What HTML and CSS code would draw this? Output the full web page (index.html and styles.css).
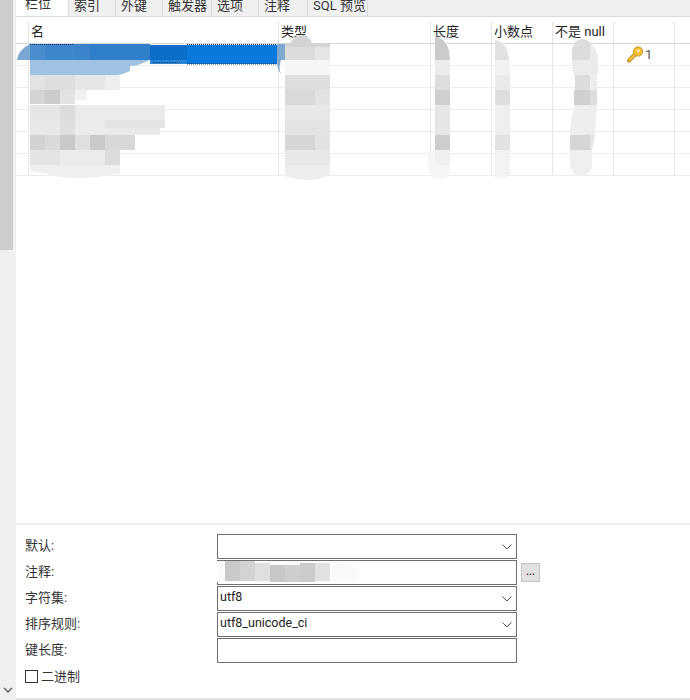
FILE: index.html
```html
<!DOCTYPE html>
<html lang="zh-CN">
<head>
<meta charset="utf-8">
<title>表设计</title>
<link rel="stylesheet" href="styles.css">
</head>
<body>
<div class="app">
  <aside class="scrollbar">
    <div class="thumb"></div>
    <svg class="down" width="10" height="6" viewBox="0 0 10 6"><path d="M1 1l4 4 4-4" fill="none" stroke="#606060" stroke-width="1.4"/></svg>
  </aside>
  <main class="main">
    <nav class="tabs">
      <span class="tab active t52">栏位</span>
      <span class="tab t47">索引</span>
      <span class="tab t47">外键</span>
      <span class="tab t49">触发器</span>
      <span class="tab t47">选项</span>
      <span class="tab t49">注释</span>
      <span class="tab t60">SQL 预览</span>
    </nav>
    <section class="grid">
      <div class="row head">
        <div class="c"></div><div class="c">名</div><div class="c">类型</div><div class="c">长度</div><div class="c">小数点</div><div class="c">不是 null</div><div class="c"></div>
      </div>
      <div class="row">
        <div class="c"></div><div class="c selected"></div><div class="c"></div><div class="c"></div><div class="c"></div><div class="c"></div>
        <div class="c keycell">
          <svg width="17" height="17" viewBox="0 0 17 17"><path d="M2 14.500l6-6" stroke="#b98a1e" stroke-width="4" stroke-linecap="round"/><path d="M2.300 14.200l6-6" stroke="#f6c544" stroke-width="2.200" stroke-linecap="round"/><circle cx="11" cy="5.500" r="4.600" fill="#f6c03a" stroke="#c4951f"/><circle cx="11.500" cy="4.800" r="1.300" fill="#fff3c0"/></svg>
          <span>1</span>
        </div>
      </div>
      <div class="row"><div class="c"></div><div class="c"></div><div class="c"></div><div class="c"></div><div class="c"></div><div class="c"></div><div class="c"></div></div>
      <div class="row"><div class="c"></div><div class="c"></div><div class="c"></div><div class="c"></div><div class="c"></div><div class="c"></div><div class="c"></div></div>
      <div class="row"><div class="c"></div><div class="c"></div><div class="c"></div><div class="c"></div><div class="c"></div><div class="c"></div><div class="c"></div></div>
      <div class="row"><div class="c"></div><div class="c"></div><div class="c"></div><div class="c"></div><div class="c"></div><div class="c"></div><div class="c"></div></div>
      <div class="row"><div class="c"></div><div class="c"></div><div class="c"></div><div class="c"></div><div class="c"></div><div class="c"></div><div class="c"></div></div>
    </section>
    <section class="form">
      <label class="lbl">默认:</label>
      <div class="field"><svg class="chev" width="10" height="6" viewBox="0 0 10 6"><path d="M.5.5L5 5 9.500.5" fill="none" stroke="#555"/></svg></div>
      <span></span>
      <label class="lbl">注释:</label>
      <div class="field"></div>
      <button class="more" type="button">...</button>
      <label class="lbl">字符集:</label>
      <div class="field">utf8<svg class="chev" width="10" height="6" viewBox="0 0 10 6"><path d="M.5.5L5 5 9.500.5" fill="none" stroke="#555"/></svg></div>
      <span></span>
      <label class="lbl">排序规则:</label>
      <div class="field">utf8_unicode_ci<svg class="chev" width="10" height="6" viewBox="0 0 10 6"><path d="M.5.5L5 5 9.500.5" fill="none" stroke="#555"/></svg></div>
      <span></span>
      <label class="lbl">键长度:</label>
      <div class="field"></div>
      <span></span>
      <label class="check"><span class="box"></span>二进制</label>
    </section>
  </main>
</div>
<svg class="redact" width="690" height="700" viewBox="0 0 690 700">
  <!-- selected row mosaic -->
  <path d="M17 60q1-10 13-16h110v16z" fill="#7aa8d2"/>
  <rect x="30" y="44" width="15" height="16" fill="#4a8dcf"/>
  <rect x="45" y="44" width="30" height="16" fill="#3f87cd"/>
  <rect x="75" y="44" width="15" height="16" fill="#3b84cc"/>
  <rect x="90" y="44" width="60" height="16" fill="#2f7fcb"/>
  <rect x="150" y="45" width="37" height="15" fill="#0b6fc9"/>
  <rect x="187" y="45" width="90" height="19" fill="#0a78dc"/>
  <rect x="150" y="60" width="37" height="4" fill="#2a84d8"/>
  <path d="M30 60h120q-12 6-20 6v5q-6 3-12 4H30z" fill="#9fc2e2"/>
  <path d="M277 44h8v16h-4q-3 8 0 14-4-4-4-14z" fill="#7fa8cf"/>
  <path d="M30 44.500h43M187 44.500h90M153 62.500h27M187 64h90" fill="none" stroke="#10305a" stroke-dasharray="1 1"/>
  <!-- name column mosaic -->
  <rect x="30" y="75" width="15" height="15" fill="#e3e3e3"/><rect x="45" y="75" width="30" height="15" fill="#dedede"/><rect x="75" y="75" width="30" height="15" fill="#e6e6e6"/><rect x="105" y="75" width="15" height="15" fill="#eeeeee"/>
  <rect x="30" y="90" width="15" height="14" fill="#d4d4d4"/><rect x="45" y="90" width="15" height="14" fill="#cbcbcb"/><rect x="60" y="90" width="15" height="14" fill="#e2e2e2"/><rect x="75" y="90" width="12" height="10" fill="#f1f1f1"/>
  <rect x="30" y="105" width="30" height="15" fill="#e6e6e6"/><rect x="60" y="105" width="15" height="15" fill="#dcdcdc"/><rect x="75" y="105" width="90" height="15" fill="#ebebeb"/>
  <rect x="30" y="120" width="30" height="15" fill="#e8e8e8"/><rect x="60" y="120" width="15" height="15" fill="#dedede"/><rect x="75" y="120" width="30" height="15" fill="#ececec"/><rect x="105" y="120" width="60" height="8" fill="#e3e3e3"/><rect x="105" y="128" width="55" height="7" fill="#eaeaea"/>
  <rect x="30" y="135" width="15" height="15" fill="#d2d2d2"/><rect x="45" y="135" width="15" height="15" fill="#dadada"/><rect x="60" y="135" width="15" height="15" fill="#c9c9c9"/><rect x="75" y="135" width="15" height="15" fill="#e0e0e0"/><rect x="90" y="135" width="15" height="15" fill="#cacaca"/><rect x="105" y="135" width="30" height="15" fill="#d8d8d8"/>
  <rect x="30" y="150" width="30" height="15" fill="#e4e4e4"/><rect x="60" y="150" width="45" height="15" fill="#ebebeb"/><rect x="105" y="150" width="15" height="15" fill="#dcdcdc"/>
  <path d="M30 165h90v8q-20 5-40 5-25 0-35-5l-15-2z" fill="#efefef"/>
  <!-- type column -->
  <path d="M285 43h5q6-10 14-8 6 3 8 8h18v15h-45z" fill="#d4d4d4"/>
  <rect x="285" y="47" width="30" height="13" fill="#dcdcdc"/><rect x="315" y="47" width="15" height="13" fill="#e6e6e6"/>
  <rect x="285" y="60" width="45" height="15" fill="#f6f6f6"/>
  <rect x="285" y="75" width="45" height="15" fill="#dedede"/>
  <rect x="285" y="90" width="30" height="15" fill="#d9d9d9"/><rect x="315" y="90" width="15" height="15" fill="#e2e2e2"/>
  <rect x="285" y="105" width="45" height="15" fill="#e8e8e8"/>
  <rect x="285" y="120" width="45" height="15" fill="#e4e4e4"/>
  <rect x="285" y="135" width="30" height="15" fill="#d6d6d6"/><rect x="315" y="135" width="15" height="15" fill="#e2e2e2"/>
  <rect x="285" y="150" width="45" height="15" fill="#e8e8e8"/>
  <path d="M285 165h45v10q-10 5-20 5-15 0-25-4z" fill="#eeeeee"/>
  <!-- length column -->
  <path d="M428 150h22v22q-2 7-8 7-14 0-14-10z" fill="#f6f6f6"/>
  <path d="M435 36q10 2 14 14l1 10h-15z" fill="#cbcbcb"/>
  <rect x="435" y="60" width="15" height="15" fill="#ececec"/><rect x="435" y="75" width="15" height="15" fill="#dddddd"/><rect x="435" y="90" width="15" height="15" fill="#cfcfcf"/><rect x="435" y="105" width="15" height="30" fill="#e6e6e6"/><rect x="435" y="135" width="15" height="15" fill="#cdcdcd"/>
  <rect x="435" y="150" width="15" height="15" fill="#f0f0f0"/>
  <!-- decimals column -->
  <path d="M495 40q13 2 14 20h-14z" fill="#e2e2e2"/>
  <rect x="495" y="60" width="15" height="15" fill="#f2f2f2"/><rect x="495" y="75" width="15" height="15" fill="#eaeaea"/><rect x="495" y="90" width="15" height="15" fill="#dedede"/><rect x="495" y="105" width="15" height="30" fill="#efefef"/><rect x="495" y="135" width="15" height="15" fill="#e2e2e2"/>
  <path d="M495 150h15v24q-7 6-15 4z" fill="#f3f3f3"/>
  <!-- not null column -->
  <path d="M572 50q2-11 10-11 10 1 16 16v20h-24q-3-12-2-25z" fill="#ebebeb"/>
  <path d="M572 50q2-11 10-11 5 0 8 4v17h-18z" fill="#dcdcdc"/>
  <rect x="575" y="75" width="15" height="15" fill="#dcdcdc"/><rect x="590" y="75" width="7" height="15" fill="#eeeeee"/>
  <rect x="574" y="90" width="23" height="15" fill="#dddddd"/><rect x="574" y="90" width="16" height="15" fill="#d0d0d0"/>
  <path d="M575 105h22l-2 30h-25q0-16 5-30z" fill="#eeeeee"/>
  <path d="M570 135h25l-3 15h-22z" fill="#e5e5e5"/><rect x="570" y="135" width="20" height="15" fill="#d6d6d6"/>
  <path d="M570 150h22v18q-5 9-12 8-10-3-10-12z" fill="#efefef"/>
  <!-- comment field mosaic -->
  <path d="M217 561h118q22 2 24 14-1 6-8 7H217z" fill="#fafafa"/>
  <rect x="225" y="561" width="15" height="20" fill="#c9c9c9"/><rect x="240" y="561" width="15" height="20" fill="#d3d3d3"/><rect x="255" y="563" width="15" height="18" fill="#dfdfdf"/><rect x="270" y="565" width="15" height="17" fill="#c8c8c8"/><rect x="285" y="565" width="15" height="17" fill="#cecece"/><rect x="300" y="563" width="15" height="19" fill="#cbcbcb"/><rect x="315" y="563" width="15" height="18" fill="#e2e2e2"/>
</svg>
</body>
</html>
```
FILE: styles.css
```css
* { box-sizing: border-box; }
html, body { margin: 0; padding: 0; height: 100%; }
body {
  position: relative;
  background: #fff;
  color: #1a1a1a;
  font: 13px/1 Roboto, "Noto Sans CJK SC", sans-serif;
  overflow: hidden;
}
.app { display: flex; width: 690px; height: 700px; }
.scrollbar {
  width: 16px;
  flex: none;
  background: #f0f0f0;
  display: flex;
  flex-direction: column;
  justify-content: space-between;
  align-items: flex-start;
  padding-bottom: 7px;
}
.thumb { width: 13px; height: 250px; background: #cdcdcd; }
.down { margin-left: 3px; }
.main { flex: 1; display: flex; flex-direction: column; border-bottom: 2px solid #e3e3e3; min-width: 0; }
.tabs {
  display: flex;
  height: 17px;
  flex: none;
  background: #f0f0f0;
  border-bottom: 1px solid #d9d9d9;
  overflow: hidden;
  align-items: flex-end;
}
.tab {
  height: 16px;
  border-right: 1px solid #d9d9d9;
  color: #333;
  padding-left: 5px;
  line-height: 13px;
  white-space: nowrap;
  display: flex;
  align-items: flex-end;
  padding-bottom: 4px;
}
.tab.active { background: #fff; height: 17px; padding-left: 9px; margin-bottom: -1px; padding-bottom: 7px; }
.t52 { width: 53px; }
.t47 { width: 47px; }
.t49 { width: 49px; }
.t60 { width: 60px; }
.grid { margin-top: 5px; flex: none; }
.row {
  display: grid;
  grid-template-columns: 13px 250px 152px 61px 61px 61px 61px;
  height: 22px;
  border-bottom: 1px solid #ececec;
}
.row.head { border-bottom-color: #d6d6d6; height: 22px; }
.c { border-right: 1px solid #e6e6e6; padding-left: 2px; line-height: 20px; color: #222; }
.head .c { display: flex; align-items: center; padding-bottom: 1px; }
.selected { background: #fff; }
.keycell { display: flex; align-items: center; justify-content: flex-start; padding-left: 13px; gap: 1px; color: #555; }
.form {
  margin-top: auto;
  border-top: 2px solid #f0f0f0;
  padding: 9px 0 9px 9px;
  display: grid;
  grid-template-columns: 192px 300px 23px;
  grid-auto-rows: 25px;
  row-gap: 1px;
  align-items: center;
}
.lbl { color: #333; padding-bottom: 2px; }
.field {
  position: relative;
  height: 25px;
  border: 1px solid #707070;
  background: #fff;
  padding-left: 2px;
  font-size: 12.5px;
  line-height: 20px;
  color: #222;
}
.chev { position: absolute; right: 4px; top: 9px; }
.more {
  width: 19px;
  height: 19px;
  margin: 0 0 0 4px;
  padding: 0 0 4px;
  border: 1px solid #c4c4c4;
  background: #e1e1e1;
  font: 11px/1 "Noto Sans", sans-serif;
  color: #111;
  align-self: center;
}
.check { grid-column: 1 / -1; display: flex; align-items: center; gap: 3px; color: #333; }
.box { width: 13px; height: 13px; border: 1px solid #333; background: #fff; }
.redact { position: absolute; left: 0; top: 0; pointer-events: none; }
```
